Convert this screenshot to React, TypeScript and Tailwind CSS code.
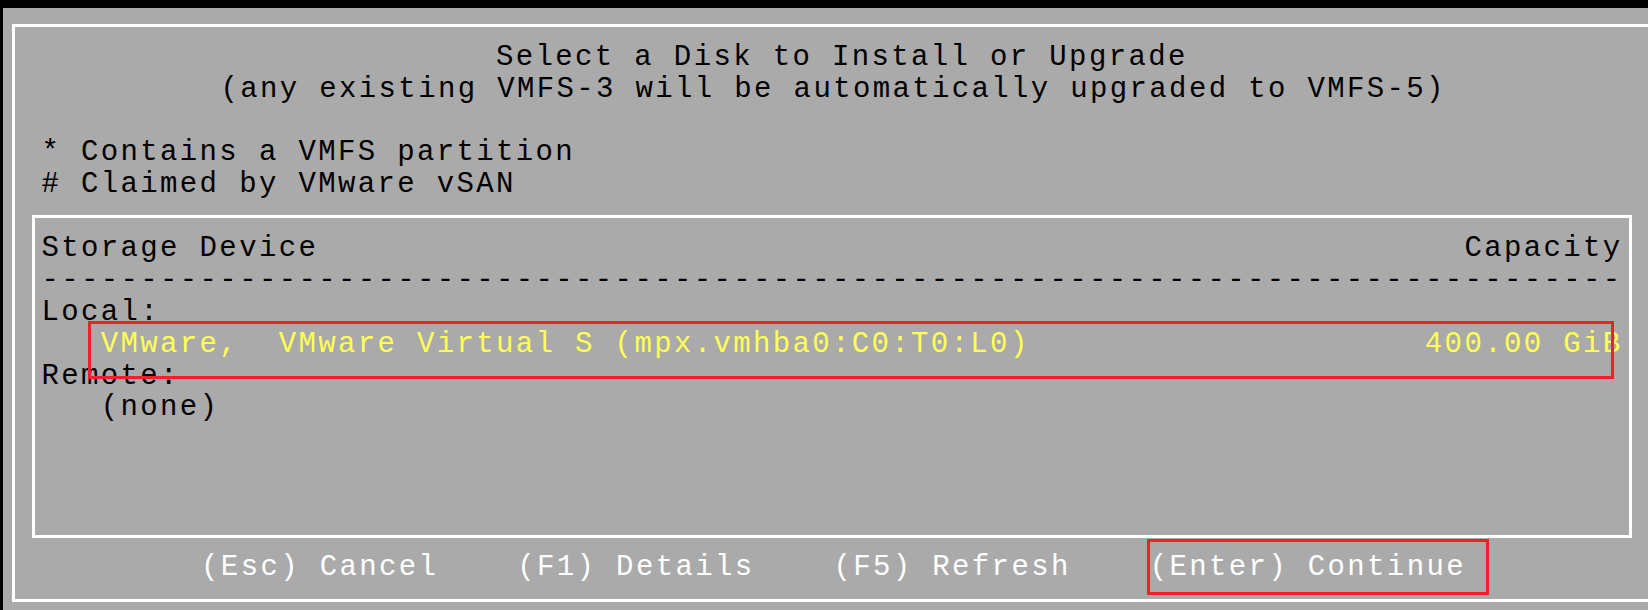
import React from "react";

const FONT = "font-['Liberation_Mono','DejaVu_Sans_Mono',monospace] text-[29px] tracking-[2.36px]";

function Line({ children, className = "" }: { children?: React.ReactNode; className?: string }) {
  return (
    <div className={`h-[31.9px] pt-[3px] leading-[31.9px] whitespace-pre ${className}`}>
      {children}
    </div>
  );
}

export default function App() {
  const dashes = "-".repeat(80);
  return (
    <div className={`relative w-[1648px] h-[610px] bg-black overflow-hidden flex flex-col ${FONT}`}>
      <div className="h-[8px] shrink-0" />
      <div className="flex flex-1">
        <div className="w-[3px] shrink-0" />
        <div className="flex-1 bg-[#aaaaaa] overflow-hidden pt-[16px] pl-[9px]">
          <div className="w-[1700px] h-[578px] border-[3px] border-white flex flex-col text-black">
            <div className="pt-[11.7px] pl-[26.5px]">
              <Line className="pl-[454.5px]">Select a Disk to Install or Upgrade</Line>
              <Line className="pl-[179px]">(any existing VMFS-3 will be automatically upgraded to VMFS-5)</Line>
              <Line />
              <Line>* Contains a VMFS partition</Line>
              <Line># Claimed by VMware vSAN</Line>
            </div>
            <div className="ml-[17px] mt-[16.8px] w-[1600px] border-[3px] border-white pl-[6.5px] pt-[12.1px] pb-[17.8px]">
              <div className="w-[1581px]">
                <Line className="flex justify-between">
                  <span>Storage Device</span>
                  <span>Capacity</span>
                </Line>
                <Line>{dashes}</Line>
                <Line>Local:</Line>
                <Line className="flex justify-between text-[#ffff55]">
                  <span>{"   VMware,  VMware Virtual S (mpx.vmhba0:C0:T0:L0)"}</span>
                  <span>400.00 GiB</span>
                </Line>
                <Line>Remote:</Line>
                <Line>{"   (none)"}</Line>
                <Line />
                <Line />
                <Line />
              </div>
            </div>
            <div className="mt-[11.1px] pl-[28px] text-white">
              <Line>{"        (Esc) Cancel    (F1) Details    (F5) Refresh    (Enter) Continue"}</Line>
            </div>
          </div>
        </div>
      </div>
      <div className="absolute left-[88px] top-[321px] w-[1526px] h-[58px] border-[3px] border-[#e8232b] pointer-events-none" />
      <div className="absolute left-[1147px] top-[539px] w-[342px] h-[56px] border-[3px] border-[#e8232b] pointer-events-none" />
    </div>
  );
}
